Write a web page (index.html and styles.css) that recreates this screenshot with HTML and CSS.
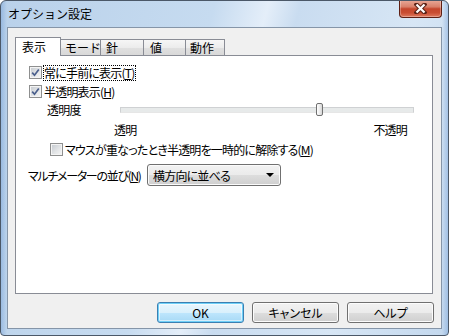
FILE: index.html
```html
<!DOCTYPE html>
<html lang="ja">
<head>
  <meta charset="utf-8" />
  <meta name="viewport" content="width=device-width, initial-scale=1.0" />
  <title>オプション設定</title>
  <link rel="stylesheet" href="styles.css">
</head>
<body>
  <div class="window">
    <div class="titlebar">
      <span class="title">オプション設定</span>
      <button class="close-btn" aria-label="閉じる">
        <svg width="13" height="11" viewBox="0 0 13 11">
          <path d="M2.5 1.5 L10.5 9.5 M10.5 1.5 L2.5 9.5" stroke="#5b2217" stroke-width="4.2" stroke-linecap="square" fill="none"/>
          <path d="M2.5 1.5 L10.5 9.5 M10.5 1.5 L2.5 9.5" stroke="#ffffff" stroke-width="2.2" fill="none"/>
        </svg>
      </button>
    </div>

    <div class="client">
      <div class="tabs">
        <div class="tab active tab-view">表示</div>
        <div class="tab tab-mode">モード</div>
        <div class="tab tab-needle">針</div>
        <div class="tab tab-value">値</div>
        <div class="tab tab-action">動作</div>
      </div>

      <div class="pane">
        <label class="check-row">
          <span class="checkbox">
            <svg width="9" height="9" viewBox="0 0 9 9"><path d="M1.2 4.6 L3.5 7.2 L7.8 1.4" stroke="#4a5f8c" stroke-width="1.7" fill="none"/></svg>
          </span>
          <span class="focus">常に手前に表示(<u>T</u>)</span>
        </label>
        <label class="check-row">
          <span class="checkbox">
            <svg width="9" height="9" viewBox="0 0 9 9"><path d="M1.2 4.6 L3.5 7.2 L7.8 1.4" stroke="#4a5f8c" stroke-width="1.7" fill="none"/></svg>
          </span>
          <span class="check-text">半透明表示(<u>H</u>)</span>
        </label>

        <div class="slider-row">
          <span class="slider-label">透明度</span>
          <div class="slider">
            <span class="thumb"></span>
          </div>
        </div>
        <div class="slider-scale">
          <span>透明</span>
          <span>不透明</span>
        </div>

        <label class="check-row sub">
          <span class="checkbox"></span>
          <span class="check-text">マウスが重なったとき半透明を一時的に解除する(<u>M</u>)</span>
        </label>

        <div class="select-row">
          <span class="select-label">マルチメーターの並び(<u>N</u>)</span>
          <div class="combo">
            <span>横方向に並べる</span>
            <span class="arrow"></span>
          </div>
        </div>
      </div>

      <div class="buttons">
        <button class="btn default">OK</button>
        <button class="btn">キャンセル</button>
        <button class="btn">ヘルプ</button>
      </div>
    </div>
  </div>
</body>
</html>
```

FILE: styles.css
```css
:root {
  --color-face: #f0f0f0;
  --color-border: #898c95;
  --color-btn-border: #707070;
  --font-ui: "Noto Sans CJK JP", "Noto Sans", sans-serif;
}

*, *::before, *::after {
  box-sizing: border-box;
  margin: 0;
  padding: 0;
}

body {
  background: #ffffff;
  font-family: var(--font-ui);
  font-size: 12px;
  color: #000;
}

/* Window frame */
.window {
  width: 449px;
  height: 336px;
  border: 1px solid #4b5868;
  border-radius: 6px 6px 4px 4px;
  padding: 0 6px 6px;
  display: flex;
  flex-direction: column;
  overflow: hidden;
  background:
    linear-gradient(to right, rgba(90, 140, 205, 0.35) 0, rgba(90, 140, 205, 0) 6px, rgba(90, 140, 205, 0) calc(100% - 6px), rgba(90, 140, 205, 0.35) 100%),
    linear-gradient(105deg, #b9d1ea 0%, #c6dbf0 40%, #e4eef9 50%, #c9dcf0 56%, #d7e6f5 78%, #c3d8ee 100%);
}

.titlebar {
  height: 26px;
  display: flex;
  justify-content: space-between;
  align-items: flex-start;
}

.title {
  padding: 5px 0 0 1px;
  line-height: 16px;
  font-size: 12px;
}

.close-btn {
  width: 43px;
  height: 18px;
  margin-top: -1px;
  border: 1px solid #5e1f14;
  border-top: none;
  border-radius: 0 0 4px 4px;
  background: linear-gradient(#e9aa99 0%, #d9806a 40%, #c4462c 52%, #c94d32 75%, #df7a5f 100%);
  box-shadow: inset 0 0 0 1px rgba(255, 255, 255, 0.3);
  display: flex;
  align-items: center;
  justify-content: center;
}

/* Client area */
.client {
  width: 435px;
  height: 302px;
  border: 1px solid #8595a8;
  background: var(--color-face);
  padding: 9px 8px 5px 7px;
  display: flex;
  flex-direction: column;
}

.tabs {
  height: 18px;
  display: flex;
  align-items: flex-end;
}

.tab {
  height: 16px;
  line-height: 15px;
  margin-left: -1px;
  padding-left: 4px;
  border: 1px solid var(--color-border);
  border-bottom: none;
  background: linear-gradient(#f6f6f6 0%, #ececec 50%, #e0e0e0 51%, #d9d9d9 100%);
  white-space: nowrap;
}

.tab.active {
  height: 19px;
  line-height: 18px;
  margin-left: 0;
  margin-bottom: -1px;
  padding-left: 6px;
  background: #ffffff;
  position: relative;
  z-index: 1;
}

.tab-view { width: 46px; }
.tab-mode { width: 41px; }
.tab-needle { width: 44px; padding-left: 5px; }
.tab-value { width: 43px; padding-left: 6px; }
.tab-action { width: 40px; }

.pane {
  width: 418px;
  height: 239px;
  border: 1px solid var(--color-border);
  background: #ffffff;
  padding: 7px 0 0 12px;
  font-feature-settings: "palt";
  letter-spacing: -0.8px;
  white-space: nowrap;
}

/* Checkboxes */
.check-row {
  height: 19px;
  padding-left: 1px;
  display: flex;
  align-items: center;
}

.check-row.sub {
  height: 18px;
  padding-left: 22px;
}

.checkbox {
  width: 13px;
  height: 13px;
  margin-right: 1px;
  border: 1px solid #8e8f8f;
  background: linear-gradient(135deg, #c3c8ce 0%, #e2e4e6 55%, #f7f7f7 100%);
  box-shadow: inset 0 0 0 1px #f4f4f4;
  display: flex;
  align-items: center;
  justify-content: center;
  flex-shrink: 0;
}

.check-text {
  padding-left: 1px;
  line-height: 15px;
}

.focus {
  line-height: 13px;
  padding: 0 1px 1px 0;
  border: 1px dotted #000;
}

/* Slider */
.slider-row {
  height: 17px;
  padding-left: 19px;
  display: flex;
  align-items: center;
}

.slider-label {
  width: 73px;
  line-height: 15px;
}

.slider {
  width: 294px;
  height: 6px;
  border: 1px solid #cfd1d3;
  border-bottom-color: #e6e6e6;
  background: #e7eaea;
  position: relative;
}

.thumb {
  position: absolute;
  left: 195px;
  top: -5px;
  width: 7px;
  height: 13px;
  border: 1px solid #707070;
  border-radius: 2px;
  background: linear-gradient(to right, #ffffff, #e9e9e9 60%, #d6d6d6);
}

.slider-scale {
  height: 22px;
  padding: 0 25px 0 86px;
  display: flex;
  justify-content: space-between;
  align-items: center;
}

/* Combo */
.select-row {
  height: 22px;
  margin-top: 6px;
  display: flex;
  align-items: center;
}

.select-label {
  flex: 0 0 119px;
  letter-spacing: -1.3px;
}

.combo {
  width: 134px;
  height: 22px;
  padding: 0 6px 0 5px;
  border: 1px solid var(--color-btn-border);
  border-radius: 3px;
  background: linear-gradient(#f2f2f2 0%, #ebebeb 50%, #dddddd 51%, #cfcfcf 100%);
  box-shadow: inset 0 0 0 1px #fbfbfb;
  display: flex;
  justify-content: space-between;
  align-items: center;
}

.arrow {
  width: 0;
  height: 0;
  border-left: 4px solid transparent;
  border-right: 4px solid transparent;
  border-top: 4px solid #000;
}

/* Dialog buttons */
.buttons {
  margin-top: 8px;
  margin-right: -1px;
  display: flex;
  justify-content: flex-end;
  gap: 8px;
}

.btn {
  width: 87px;
  height: 21px;
  font-family: var(--font-ui);
  font-size: 12px;
  line-height: 19px;
  color: #000;
  border: 1px solid var(--color-btn-border);
  border-radius: 3px;
  background: linear-gradient(#f2f2f2 0%, #ebebeb 50%, #dddddd 51%, #cfcfcf 100%);
  box-shadow: inset 0 0 0 1px #fcfcfc;
  font-feature-settings: "palt";
}

.btn.default {
  border-color: #3c7fb1;
  background: linear-gradient(#eaf6fd 0%, #d9f0fc 50%, #bee6fd 51%, #a7d9f5 100%);
  box-shadow: inset 0 0 0 1px #6fd0f8, inset 0 0 0 2px rgba(255, 255, 255, 0.5);
}
```
